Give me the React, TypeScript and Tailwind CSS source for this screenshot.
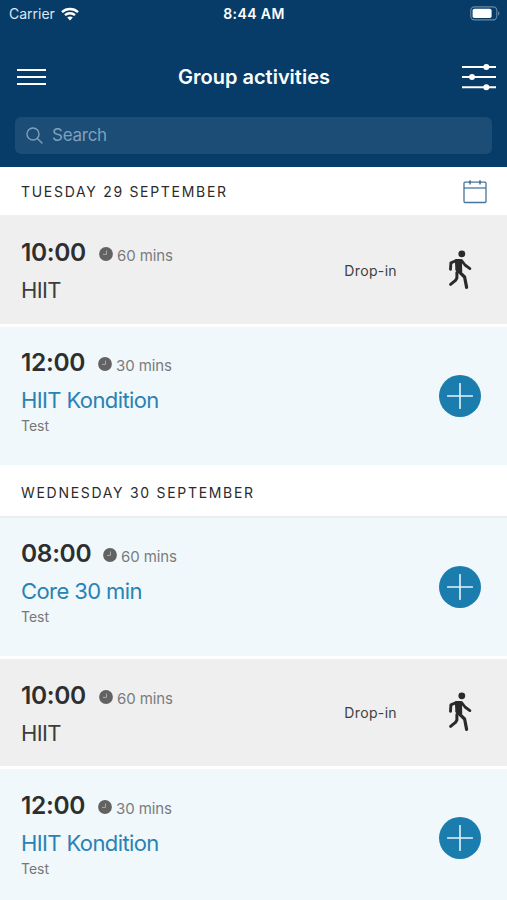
import React from "react";

type Activity = {
  time: string;
  duration: string;
  title: string;
  note?: string;
  timeClass: string;
  offsetClass: string;
  actionClass: string;
};

const tuesday: Activity[] = [
  { time: "10:00", duration: "60 mins", title: "HIIT", timeClass: "w-[66px]", offsetClass: "pt-5", actionClass: "mb-[2px]" },
  { time: "12:00", duration: "30 mins", title: "HIIT Kondition", note: "Test", timeClass: "w-[65px]", offsetClass: "pt-5", actionClass: "mb-[1px]" },
];

const wednesday: Activity[] = [
  { time: "08:00", duration: "60 mins", title: "Core 30 min", note: "Test", timeClass: "w-[70px]", offsetClass: "pt-5", actionClass: "mb-[1px]" },
  { time: "10:00", duration: "60 mins", title: "HIIT", timeClass: "w-[66px]", offsetClass: "pt-[21px]", actionClass: "mb-[2px]" },
  { time: "12:00", duration: "30 mins", title: "HIIT Kondition", note: "Test", timeClass: "w-[65px]", offsetClass: "pt-[21px]", actionClass: "mb-0" },
];

function WifiIcon() {
  return (
    <svg width="18" height="14" viewBox="0 0 18 14" fill="none" stroke="#fff" strokeWidth="2.4">
      <path d="M1 5.1C5.5 0.9 12.5 0.9 17 5.1" />
      <path d="M4 8.2C6.8 5.6 11.2 5.6 14 8.2" />
      <path d="M6.2 10.5C7.8 9.1 10.2 9.1 11.8 10.5L9 13.4Z" fill="#fff" stroke="none" />
    </svg>
  );
}

function BatteryIcon() {
  return (
    <svg width="31" height="15" viewBox="0 0 31 15" fill="none">
      <rect x="0.8" y="0.9" width="26" height="13" rx="3.6" stroke="#fff" strokeOpacity="0.4" strokeWidth="1.1" />
      <rect x="2.6" y="2.8" width="19" height="9.2" rx="1.8" fill="#fff" />
      <path d="M28.2 5.2C29.8 5.9 29.8 8.9 28.2 9.6Z" fill="#fff" fillOpacity="0.45" />
    </svg>
  );
}

function FilterIcon() {
  return (
    <svg width="34" height="28" viewBox="0 0 34 28" fill="#fff">
      <path d="M0 4H34M0 14H34M0 24.2H34" stroke="#fff" strokeWidth="2.1" />
      <circle cx="24.3" cy="4" r="3" />
      <circle cx="10" cy="14" r="3" />
      <circle cx="24.3" cy="24.2" r="3" />
    </svg>
  );
}

function CalendarIcon() {
  return (
    <svg width="24" height="24" viewBox="0 0 24 24" fill="none" stroke="#45759d" strokeWidth="1.3">
      <rect x="1" y="2.2" width="22" height="20.3" rx="1" />
      <path d="M1 8H23" />
      <path d="M7 0.2V4.6M17 0.2V4.6" stroke="#315878" />
    </svg>
  );
}

function ClockIcon() {
  return (
    <svg width="14" height="14" viewBox="0 0 14 14">
      <circle cx="7" cy="7" r="6.9" fill="#626262" />
      <path d="M7.5 3.5V7.4H4" fill="none" stroke="#a9a9a9" strokeWidth="1" />
    </svg>
  );
}

function WalkIcon() {
  return (
    <svg width="24" height="40" viewBox="0 0 24 40" fill="none" stroke="#2a2a2a" strokeLinecap="round" strokeLinejoin="round">
      <circle cx="13.8" cy="3.8" r="3.4" fill="#2a2a2a" stroke="none" />
      <path d="M6.8 9.6L9 9H12.4L14 10.6L14.2 21.5L13 22.8L7.4 20Z" fill="#2a2a2a" stroke="none" />
      <path d="M8.4 10.5L2.9 12.8L2.5 19.4" strokeWidth="2.9" />
      <path d="M13.4 10.4L17 15L21.9 18.6" strokeWidth="2.8" />
      <path d="M8.9 22.6L8.9 28L7.5 30.4L2.6 34.4" strokeWidth="3" />
      <path d="M9.2 19.8L16.6 27L18.6 37.4" strokeWidth="3.2" />
    </svg>
  );
}

function PlusButton() {
  return (
    <button className="flex size-[42px] items-center justify-center rounded-full bg-[#1b7cae]">
      <svg width="26" height="26" viewBox="0 0 26 26" stroke="#e4f5fc" strokeWidth="1.6" strokeLinecap="round">
        <path d="M13 0.7V25.3M0.7 13H25.3" />
      </svg>
    </button>
  );
}

function DateHeading({ children }: { children: React.ReactNode }) {
  return <h2 className="whitespace-nowrap text-[14px] leading-5 tracking-[1.7px] text-[#2b2b2b]">{children}</h2>;
}

function ActivityRow({ item }: { item: Activity }) {
  const bookable = item.note !== undefined;
  return (
    <div
      className={
        bookable
          ? "flex h-[138px] shrink-0 items-center bg-[#f0f8fb] pl-[21px] pr-[26px]"
          : "flex h-[107px] shrink-0 items-center bg-[#efefef] pl-[21px] pr-[35px]"
      }
    >
      <div className={`flex-1 self-start whitespace-nowrap ${item.offsetClass}`}>
        <div className="flex h-[30px] items-center">
          <span className={`${item.timeClass} text-[24.5px] font-semibold leading-[30px] tracking-[-0.35px] text-[#2e2e2e]`}>{item.time}</span>
          <span className="ml-3 mt-1 flex"><ClockIcon /></span>
          <span className="ml-1 mt-[7px] text-[15px] leading-5 tracking-[-0.1px] text-[#7b7b7b]">{item.duration}</span>
        </div>
        <div className={`mt-[9px] text-[22px] leading-7 tracking-[-0.6px] ${bookable ? "text-[#2a82b4]" : "text-[#3c3c3c]"}`}>
          {item.title}
        </div>
        {bookable && <div className="mt-[2px] text-[14px] leading-5 text-[#777]">{item.note}</div>}
      </div>
      {!bookable && <span className="mr-[51px] text-[14px] leading-5 tracking-[0.35px] text-[#3f3f3f]">Drop-in</span>}
      <div className={item.actionClass}>{bookable ? <PlusButton /> : <WalkIcon />}</div>
    </div>
  );
}

export default function App() {
  return (
    <div className="flex h-[900px] w-[507px] flex-col overflow-hidden bg-white font-['Inter',sans-serif]">
      <header className="h-[167px] shrink-0 bg-[#073c68] text-white">
        <div className="grid h-[27px] grid-cols-3 items-center pl-[9px] pr-[6px]">
          <div className="flex items-center gap-[6px] text-[14px] text-[#dce7f0]">
            <span>Carrier</span>
            <WifiIcon />
          </div>
          <div className="-ml-[2px] text-center text-[14px] font-semibold tracking-[0.4px]">8:44 AM</div>
          <div className="flex justify-end"><BatteryIcon /></div>
        </div>
        <div className="mt-[30px] flex h-10 items-center justify-between pl-[17px] pr-[11px]">
          <button className="flex flex-col gap-[5px]">
            <span className="h-[2px] w-[29px] bg-white" />
            <span className="h-[2px] w-[29px] bg-white" />
            <span className="h-[2px] w-[29px] bg-white" />
          </button>
          <h1 className="text-[20px] font-semibold">Group activities</h1>
          <FilterIcon />
        </div>
        <div className="mx-[15px] mt-5 flex h-[37px] items-center gap-[9px] rounded-[6px] bg-[#1c4d76] pl-[11px] text-[17px] text-[#7fa0bd]">
          <svg width="17" height="17" viewBox="0 0 17 17" fill="none" stroke="#7fa0bd" strokeWidth="1.4" strokeLinecap="round">
            <circle cx="7" cy="7" r="6" />
            <path d="M11.4 11.4L16 16" />
          </svg>
          <span className="tracking-[-0.25px]">Search</span>
        </div>
      </header>
      <div className="flex h-12 shrink-0 items-center justify-between pl-[21px] pr-5 pt-[2px]">
        <DateHeading>TUESDAY 29 SEPTEMBER</DateHeading>
        <CalendarIcon />
      </div>
      <div className="flex flex-col gap-[3px] border-t-2 border-[#efefef]">
        {tuesday.map((item) => <ActivityRow key={item.time} item={item} />)}
      </div>
      <div className="flex h-[51px] shrink-0 items-center pl-[21px] pt-1">
        <DateHeading>WEDNESDAY 30 SEPTEMBER</DateHeading>
      </div>
      <div className="flex flex-col gap-[3px] border-t-2 border-[#ebeeef]">
        {wednesday.map((item) => <ActivityRow key={item.time} item={item} />)}
      </div>
    </div>
  );
}
